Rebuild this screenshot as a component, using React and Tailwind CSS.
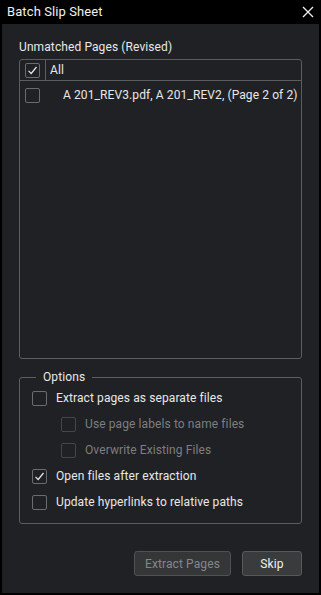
import React from 'react';

const Check = ({ checked, disabled }) => (
  <span
    className={`flex h-[15px] w-[15px] shrink-0 items-center justify-center rounded-[2px] border ${
      disabled ? 'border-[#454649]' : 'border-[#6b6c6f]'
    }`}
  >
    {checked && (
      <svg width="11" height="11" viewBox="0 0 11 11" fill="none">
        <path d="M1.5 5.8 L4.2 8.5 L9.5 2" stroke="#e6e6e6" strokeWidth="1.2" />
      </svg>
    )}
  </span>
);

const Option = ({ label, checked, disabled, indent }) => (
  <div className={`flex h-[26px] items-center gap-[9px] ${indent ? 'pl-[29px]' : ''}`}>
    <Check checked={checked} disabled={disabled} />
    <span className={disabled ? 'text-[#7d7e80]' : 'text-[#e8e8e8]'}>{label}</span>
  </div>
);

export default function App() {
  return (
    <div className="flex h-[595px] w-[321px] flex-col bg-black font-['Roboto',sans-serif] text-[12px] tracking-[0.1px] text-[#e8e8e8]">
      <div className="flex h-[24px] items-center justify-between pl-[7px] pr-[7px]">
        <span className="text-[13px] text-[#f0f0f0]">Batch Slip Sheet</span>
        <svg width="12" height="12" viewBox="0 0 12 12">
          <path d="M1 1 L11 11 M11 1 L1 11" stroke="#f0f0f0" strokeWidth="1.3" />
        </svg>
      </div>
      <div className="mx-[2px] mb-[2px] flex flex-1 flex-col bg-[#202124] px-[17px] pt-[13px]">
        <div className="h-[20px] leading-[20px] text-[#e8e8e8]">Unmatched Pages (Revised)</div>
        <div className="mt-[2px] flex h-[300px] flex-col rounded-[3px] border border-[#5c5d60]">
          <div className="flex h-[21px] items-center border-b border-[#5c5d60]">
            <div className="flex h-full w-[26px] items-center justify-center border-r border-[#5c5d60]">
              <Check checked />
            </div>
            <span className="pl-[4px]">All</span>
          </div>
          <div className="flex h-[28px] items-center pl-[5px]">
            <Check />
            <span className="pl-[23px]">A 201_REV3.pdf, A 201_REV2, (Page 2 of 2)</span>
          </div>
        </div>
        <fieldset className="mt-[9px] rounded-[3px] border border-[#5c5d60] px-[12px] pb-[8px] pt-0">
          <legend className="ml-[4px] px-[7px] text-[#e8e8e8]">Options</legend>
          <div className="-mt-[1px] flex flex-col">
            <Option label="Extract pages as separate files" />
            <Option label="Use page labels to name files" indent disabled />
            <Option label="Overwrite Existing Files" indent disabled />
            <Option label="Open files after extraction" checked />
            <Option label="Update hyperlinks to relative paths" />
          </div>
        </fieldset>
        <div className="mt-[27px] flex justify-end gap-[11px]">
          <button className="h-[25px] w-[97px] rounded-[3px] border border-[#505154] bg-[#353638] text-[#85868a]">
            Extract Pages
          </button>
          <button className="h-[25px] w-[60px] rounded-[3px] border border-[#58595c] bg-[#3a3b3d] text-[#f0f0f0]">
            Skip
          </button>
        </div>
      </div>
    </div>
  );
}
